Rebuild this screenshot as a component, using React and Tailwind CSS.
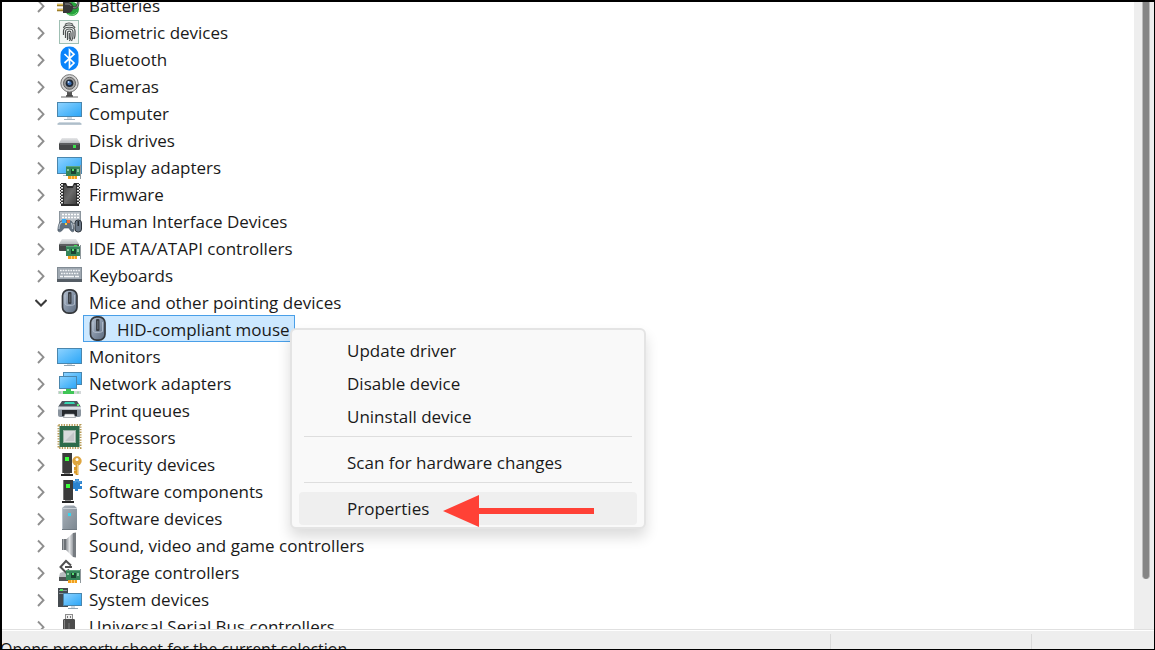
import { useState } from 'react';

function Svg({ children }) {
  return (
    <svg viewBox="0 0 26 27" className="h-[27px] w-[26px] shrink-0" aria-hidden="true">
      {children}
    </svg>
  );
}

function Defs() {
  return (
    <svg className="absolute h-0 w-0" aria-hidden="true">
      <defs>
        <linearGradient id="screen" x1="0" y1="0" x2="1" y2="1">
          <stop offset="0" stopColor="#8fd3ff" />
          <stop offset="0.5" stopColor="#5bbcfb" />
          <stop offset="1" stopColor="#2ba6f7" />
        </linearGradient>
        <linearGradient id="metal" x1="0" y1="0" x2="1" y2="1">
          <stop offset="0" stopColor="#a9b2bb" />
          <stop offset="1" stopColor="#7c8790" />
        </linearGradient>
        <linearGradient id="silver" x1="0" y1="0" x2="0" y2="1">
          <stop offset="0" stopColor="#e6e7e9" />
          <stop offset="1" stopColor="#b8bbbe" />
        </linearGradient>
        <linearGradient id="mouse" x1="0" y1="0" x2="1" y2="1">
          <stop offset="0" stopColor="#b9c4d2" />
          <stop offset="0.5" stopColor="#8492a5" />
          <stop offset="1" stopColor="#5d6b7e" />
        </linearGradient>
        <linearGradient id="chip" x1="0" y1="0" x2="1" y2="1">
          <stop offset="0" stopColor="#4a4a4a" />
          <stop offset="0.5" stopColor="#6a6a6a" />
          <stop offset="1" stopColor="#3f3f3f" />
        </linearGradient>
        <linearGradient id="cone" x1="0" y1="0" x2="1" y2="0">
          <stop offset="0" stopColor="#8c9095" />
          <stop offset="0.5" stopColor="#e2e4e6" />
          <stop offset="1" stopColor="#9a9ea3" />
        </linearGradient>
      </defs>
    </svg>
  );
}

function Screen({ x, y, w, h }) {
  return <rect x={x + 0.5} y={y + 0.5} width={w - 1} height={h - 1} fill="url(#screen)" stroke="#4a86ad" />;
}

// Green expansion card with gold contacts, shared by several device classes
function Card({ y = 12 }) {
  return (
    <g>
      <rect x="9" y={y} width="14" height="10" fill="#35855a" />
      <rect x="9" y={y} width="14" height="1" fill="#5ea57c" />
      <rect x="14" y={y + 3} width="5" height="5" fill="#1b4430" />
      <rect x="15" y={y + 3} width="2" height="2" fill="#58e072" />
      <rect x="10" y={y + 3} width="2" height="2" fill="#8bc7a0" />
      <rect x="20" y={y + 3} width="2" height="3" fill="#8bc7a0" />
      <rect x="11" y={y + 10} width="9" height="3" fill="#f2a01c" />
      <path d={`M14.5 ${y + 10}v3M17.5 ${y + 10}v3`} stroke="#ffd277" />
      <path d={`M23.5 ${y - 1}v14`} stroke="#8f989c" />
    </g>
  );
}

function Tower({ x = 4 }) {
  return (
    <g>
      <rect x={x + 1} y="3" width="10" height="20" fill="#3b3b3b" />
      <path d={`M${x + 1.5} 3v20`} stroke="#777" />
      <rect x={x + 4} y="7" width="4" height="4" fill="#3cff3c" />
      <rect x={x} y="24" width="12" height="2" fill="#252525" />
      <rect x={x + 3} y="23" width="6" height="1" fill="#888" />
    </g>
  );
}

function Drive({ y, w = 21 }) {
  return (
    <g>
      <path d={`M5 ${y}h${w - 6}l3 5H2z`} fill="url(#silver)" />
      <rect x="2" y={y + 5} width={w} height="7" rx="1" fill="#454748" />
      <path d={`M3 ${y + 6}h${w - 2}`} stroke="#77797a" />
    </g>
  );
}

const icons = {
  battery: (
    <>
      <circle cx="15" cy="18" r="7" fill="#26a33b" />
      <path d="M11 23c3 2 7 1 9-2" stroke="#7cd987" fill="none" />
      <path d="M14 15c4 4 8 1 7-5" stroke="#444" strokeWidth="2.6" fill="none" />
      <path d="M14 15c4 4 8 1 7-5" stroke="#9a9a9a" strokeWidth="0.8" fill="none" />
      <path d="M0 14h7M0 19h7" stroke="#8a6918" strokeWidth="2.4" />
      <path d="M0 13.7h7M0 18.7h7" stroke="#f0d268" strokeWidth="1" />
      <path d="M6 11h4c4 0 6 2 6 5.500s-2 5.500-6 5.500H6z" fill="#383838" />
      <path d="M8 13h3c2 0 3 1 3 2" stroke="#8b8b8b" fill="none" />
    </>
  ),
  biometric: (
    <>
      <rect x="2.500" y="2.500" width="19" height="23" fill="#f3f6f4" stroke="#9fbfb3" />
      <g fill="none" stroke="#4c5050" strokeWidth="1.200">
        <path d="M8 6.500c2-2 6-2 8 0M6.500 10c1-4 10-4 11.500 0" />
        <path d="M6.500 17v-4c0-5 11.500-5 11.500 0v4c0 2-.5 3-1 4" />
        <path d="M8.500 20v-6c0-4 7.500-4 7.500 0v4c0 2-.5 3-1.500 5" />
        <path d="M10.500 22v-7c0-2.500 3.500-2.500 3.500 0v3c0 2-.5 3.500-1.500 5" />
        <path d="M12.300 15v6" />
      </g>
    </>
  ),
  bluetooth: (
    <>
      <rect x="3.500" y="1.500" width="18" height="24" rx="8.500" fill="#0a84fb" />
      <path d="M7.500 9l9.500 9-4.500 4.500V5L17 9.300 7.500 18" fill="none" stroke="#fff" strokeWidth="1.700" />
    </>
  ),
  camera: (
    <>
      <path d="M10 20h5v4h-5z" fill="#555" />
      <path d="M4 25h17" stroke="#9b9b9b" strokeWidth="1.500" />
      <path d="M9 24h7" stroke="#444" strokeWidth="1.500" />
      <circle cx="12.500" cy="11.300" r="8.700" fill="#d2d2d2" stroke="#777" />
      <circle cx="12.500" cy="11.300" r="6" fill="#9a9a9a" stroke="#5f5f5f" />
      <circle cx="12.500" cy="11.300" r="3.800" fill="#1d2735" />
      <circle cx="12.500" cy="11.300" r="2" fill="#3d6db0" />
      <circle cx="11.500" cy="10" r="1" fill="#b7d8ff" />
    </>
  ),
  computer: (
    <>
      <Screen x={0} y={3} w={25} h={15} />
      <path d="M10 18h5v2h-5z" fill="#d2dae0" />
      <path d="M7 20.500h11" stroke="#a3b3bf" />
      <path d="M2 23h21l1.500 2.500H.5z" fill="#cdd7df" />
      <path d="M.5 25h24" stroke="#8fa5b5" />
    </>
  ),
  disk: (
    <>
      <Drive y={12} />
      <rect x="16" y="19" width="3" height="3" fill="#3be04b" />
    </>
  ),
  display: (
    <>
      <Screen x={0} y={4} w={25} h={17} />
      <path d="M6 22.500h6" stroke="#a7bac7" />
      <Card y={13} />
    </>
  ),
  firmware: (
    <>
      <path d="M4 3h5l1.500 3h5L17 3h5v23H4z" fill="#2c2c2c" />
      <path d="M7 5h2l1 3h6l1-3h2v19H7z" fill="url(#chip)" />
      <path d="M3.500 4v21M22.500 4v21" stroke="#222" strokeWidth="1" strokeDasharray="1.500 1.500" />
      <path d="M5 4v21M21 4v21" stroke="#f0f0f0" strokeWidth="2" strokeDasharray="1.500 1.500" />
    </>
  ),
  hid: (
    <>
      <rect x="2.500" y="4.500" width="21" height="12" fill="#b9c0c7" stroke="#8b959d" />
      <path d="M5 7.500h17M5 10.500h17" stroke="#fff" strokeWidth="1.600" strokeDasharray="2 1" />
      <path d="M4 14c2-1 8-1 10 0 2 1 3.500 7 3 10-1.500 2-3.500 0-5-3H7c-2 3-4 5-6 3-.5-3 1-9 3-10z" fill="#61707f" stroke="#46525e" strokeWidth="0.600" />
      <path d="M2 22c0-3 1-6 3-7M15.500 22c0-2 0-4-1-6" stroke="#b6c1cc" strokeWidth="1.200" fill="none" />
      <rect x="5" y="12" width="4" height="4" fill="#35aaf5" />
      <rect x="10" y="13" width="3" height="3" fill="#ed6a36" />
      <rect x="8" y="16" width="2" height="2" fill="#f8ca3c" />
      <rect x="18" y="13" width="6.500" height="12" rx="3" fill="#6b7887" stroke="#2c333b" />
      <path d="M21.300 14v5" stroke="#252b32" strokeWidth="1.500" />
    </>
  ),
  ide: (
    <>
      <Drive y={5} w={20} />
      <rect x="17" y="11" width="3" height="1" fill="#3be04b" />
      <Card y={12} />
    </>
  ),
  keyboard: (
    <>
      <rect x="0.500" y="6.500" width="24" height="14" fill="#a0a9b2" stroke="#818b94" />
      <path d="M0 19.500h25" stroke="#555d65" strokeWidth="3" />
      <path d="M3 9.500h20M4 12.500h18" stroke="#f4f6f8" strokeWidth="1.600" strokeDasharray="1.700 0.900" />
      <path d="M3 15.500h3M7 15.500h10M18 15.500h4" stroke="#f4f6f8" strokeWidth="1.600" />
    </>
  ),
  mouse: (
    <>
      <rect x="5.500" y="1.800" width="14.500" height="23.400" rx="6" fill="url(#mouse)" stroke="#35383c" strokeWidth="1.700" />
      <path d="M8 16c1 2 8 2 10 0M8 7v9M17.500 7v9" stroke="#c1ccd8" strokeWidth="0.700" fill="none" />
      <rect x="11" y="4" width="3.500" height="12" rx="1" fill="#3b3f45" />
      <path d="M12.800 6v8" stroke="#747b84" strokeWidth="0.800" />
    </>
  ),
  monitor: (
    <>
      <Screen x={0} y={6} w={25} h={16} />
      <path d="M10 22h5v1h-5z" fill="#d2dae0" />
      <path d="M7 23.500h11" stroke="#91a5b3" />
    </>
  ),
  network: (
    <>
      <Screen x={6} y={3} w={19} h={13} />
      <Screen x={2} y={7} w={18} h={13} />
      <path d="M1 23.500h23" stroke="#d3d7d9" strokeWidth="3" />
      <path d="M9 20h5v2h3v3H6v-3h3z" fill="#3fc556" />
      <path d="M2 23.500h2M20 23.500h2" stroke="#a3d8ad" strokeWidth="2" />
    </>
  ),
  printer: (
    <>
      <path d="M5 5h15l4 6H1z" fill="#4c555e" />
      <path d="M8 6h9l1 2H7z" fill="#35d6b1" />
      <path d="M1 11h23v8c0 1-1 2-2 2H3c-1 0-2-1-2-2z" fill="#8a949e" />
      <path d="M1 12h23" stroke="#d9dfe4" strokeWidth="3" />
      <path d="M5 14h15v6H5z" fill="#25292d" />
      <path d="M8 18h9l1.500 3.500H6.500z" fill="#f4f5f6" stroke="#777e85" strokeWidth="0.600" />
      <rect x="20" y="8" width="2" height="2" fill="#5cf06f" />
    </>
  ),
  processor: (
    <>
      <rect x="1.500" y="2" width="22" height="23" fill="none" stroke="#b79a55" strokeWidth="2" strokeDasharray="1.300 1.300" />
      <rect x="2.500" y="3" width="20" height="21" fill="#2d6b4b" />
      <rect x="6.500" y="7.500" width="12" height="12" fill="#d9dbdc" stroke="#9eb3a7" />
      <path d="M8 18L17 9v9z" fill="#c4c7c9" />
    </>
  ),
  security: (
    <>
      <Tower />
      <path d="M20 14v11M20 18.500h-3M20 22h-3" stroke="#d99a2b" strokeWidth="2.800" />
      <circle cx="20" cy="11" r="4.700" fill="#dfa640" />
      <circle cx="20" cy="9.500" r="1.500" fill="#fff" />
      <path d="M20.500 14v10" stroke="#f6cf7c" strokeWidth="0.800" />
    </>
  ),
  component: (
    <>
      <path d="M14 4h4V2h4v2h3v3h-2v2h2v3h-4v2h-3v-2h-4z" fill="#2c83cf" />
      <Tower x={5} />
      <path d="M17 5h2V3h2v2h3" fill="none" stroke="#6fb3e8" strokeWidth="0.800" />
    </>
  ),
  softdevice: (
    <>
      <path d="M5 4l3-2.500h9L20 4v21.500H5z" fill="url(#metal)" />
      <path d="M5 4.500h15" stroke="#c9d0d6" />
      <path d="M5.500 4v21.500" stroke="#b9c2ca" />
      <path d="M5 25.500h15" stroke="#707a83" />
      <rect x="11" y="9" width="3" height="3" fill="#35d5ee" />
    </>
  ),
  sound: (
    <>
      <path d="M5 8h5v11H5z" fill="#6d7277" />
      <path d="M6.500 8v11" stroke="#a5a9ad" />
      <path d="M9 8.500l7-6.500v24l-7-7z" fill="url(#cone)" />
      <path d="M16 2l3-.5v25l-3-.5z" fill="#777c81" />
    </>
  ),
  storage: (
    <>
      <path d="M3 15l3-1 8 1v4H2z" fill="#b9bdc0" />
      <rect x="2" y="19" width="10" height="4" fill="#505355" />
      <path d="M14 7.500L9 3 3.500 9 9 14.500l3-3" fill="#fff" stroke="#505050" strokeWidth="2" />
      <path d="M8 9h7" stroke="#505050" strokeWidth="2" />
      <Card y={12} />
    </>
  ),
  system: (
    <>
      <rect x="1" y="3" width="10" height="19" fill="#454b50" />
      <path d="M2 5.500h8M2 8.500h8" stroke="#8c969d" />
      <rect x="3" y="4" width="3" height="2" fill="#4ee35d" />
      <Screen x={6} y={8} w={19} h={13} />
      <path d="M14 21h4v2h-4z" fill="#d2dae0" />
      <path d="M11 23.500h10" stroke="#91a5b3" />
    </>
  ),
  usb: (
    <>
      <rect x="8.500" y="2.500" width="7" height="6" fill="#eeeeee" stroke="#8d8d8d" />
      <path d="M10.500 4v2M13.500 4v2" stroke="#777" />
      <path d="M6 8c0-1 1-1 2-1h8c1 0 2 0 2 1v19H6z" fill="#4b4b4b" />
      <path d="M7.500 8v12" stroke="#858585" />
      <path d="M12 11v9" stroke="#777" />
    </>
  ),
};

const devices = [
  { name: 'Batteries', icon: 'battery' },
  { name: 'Biometric devices', icon: 'biometric' },
  { name: 'Bluetooth', icon: 'bluetooth' },
  { name: 'Cameras', icon: 'camera' },
  { name: 'Computer', icon: 'computer' },
  { name: 'Disk drives', icon: 'disk' },
  { name: 'Display adapters', icon: 'display' },
  { name: 'Firmware', icon: 'firmware' },
  { name: 'Human Interface Devices', icon: 'hid' },
  { name: 'IDE ATA/ATAPI controllers', icon: 'ide' },
  { name: 'Keyboards', icon: 'keyboard' },
  { name: 'Mice and other pointing devices', icon: 'mouse', children: ['HID-compliant mouse'] },
  { name: 'Monitors', icon: 'monitor' },
  { name: 'Network adapters', icon: 'network' },
  { name: 'Print queues', icon: 'printer' },
  { name: 'Processors', icon: 'processor' },
  { name: 'Security devices', icon: 'security' },
  { name: 'Software components', icon: 'component' },
  { name: 'Software devices', icon: 'softdevice' },
  { name: 'Sound, video and game controllers', icon: 'sound' },
  { name: 'Storage controllers', icon: 'storage' },
  { name: 'System devices', icon: 'system' },
  { name: 'Universal Serial Bus controllers', icon: 'usb' },
];

const menuGroups = [
  ['Update driver', 'Disable device', 'Uninstall device'],
  ['Scan for hardware changes'],
  ['Properties'],
];

function DeviceRow({ device }) {
  const [open, setOpen] = useState(Boolean(device.children));

  return (
    <li>
      <button
        type="button"
        aria-expanded={open}
        onClick={() => setOpen(!open)}
        className="flex h-[27px] items-center pl-[33px] whitespace-nowrap"
      >
        <svg viewBox="0 0 12 27" className="mr-[10px] h-[27px] w-3 shrink-0" fill="none" aria-hidden="true">
          {open ? (
            <path d="M0.500 12l5.500 5.500 5.500-5.500" stroke="#3a3a3a" strokeWidth="2" />
          ) : (
            <path d="M3 9.500l5.500 5.700L3 21" stroke="#8f8f8f" strokeWidth="1.900" />
          )}
        </svg>
        <Svg>{icons[device.icon]}</Svg>
        <span className="pt-[2px] pl-[6px]">{device.name}</span>
      </button>
      {open && device.children && (
        <ul>
          {device.children.map((child) => (
            <li key={child} className="pl-[81px]">
              <button
                type="button"
                className="flex h-[27px] w-[212px] items-center border border-[#4a9fe8] bg-[#cce8ff] pl-px whitespace-nowrap"
              >
                <Svg>{icons[device.icon]}</Svg>
                <span className="pt-[2px] pl-[6px]">{child}</span>
              </button>
            </li>
          ))}
        </ul>
      )}
    </li>
  );
}

function ContextMenu() {
  return (
    <div
      role="menu"
      className="absolute top-[326px] left-[288px] w-[356px] rounded-md border-2 border-[#e4e4e4] bg-[#f9f9f9] px-[7px] pt-1 pb-[2px] shadow-[0_8px_14px_rgba(0,0,0,0.14)]"
    >
      {menuGroups.map((group, i) => (
        <div key={group[0]}>
          {i > 0 && <hr className="mx-[5px] mt-[3px] mb-[9px] border-[#dedede]" />}
          {group.map((label) => (
            <button
              key={label}
              type="button"
              role="menuitem"
              className={`flex h-[33px] w-full items-center rounded-sm pl-[48px] ${label === 'Properties' ? 'bg-[#efefef]' : ''}`}
            >
              {label}
            </button>
          ))}
        </div>
      ))}
      <svg viewBox="0 0 152 32" className="absolute right-[49px] bottom-0 h-8 w-[152px]" aria-hidden="true">
        <path d="M0 16L36 0v13h115v6H36v13z" fill="#ff4136" />
      </svg>
    </div>
  );
}

export default function App() {
  return (
    <div className="relative flex h-screen flex-col overflow-hidden border-t-2 border-r border-b border-l-2 border-black bg-white font-['Open_Sans',sans-serif] text-[17px] leading-6 text-[#1a1a1a]">
      <Defs />
      <main className="flex min-h-0 flex-1">
        <div className="min-w-0 flex-1 overflow-hidden">
          <ul className="-mt-[11px]">
            {devices.map((device) => (
              <DeviceRow key={device.name} device={device} />
            ))}
          </ul>
        </div>
        <div className="w-5 bg-[#eeeeee] pl-2">
          <div className="h-[92%] w-2 rounded-b-sm border-x border-[#bcbcbc] bg-[#858585]" />
        </div>
      </main>
      <footer className="h-5 shrink-0 border-t border-[#e0e0e0] bg-[#eeeeee]">
        <div className="flex h-full overflow-hidden border-t border-white text-base">
          <p className="flex-1 pt-[6px] whitespace-nowrap">
            <span className="-ml-[2px]">Opens property sheet for the current selection.</span>
          </p>
          <div className="mt-[3px] w-[201px] border-l border-[#dadada]" />
          <div className="mt-[3px] w-[123px] border-l border-[#dadada]" />
        </div>
      </footer>
      <ContextMenu />
    </div>
  );
}
